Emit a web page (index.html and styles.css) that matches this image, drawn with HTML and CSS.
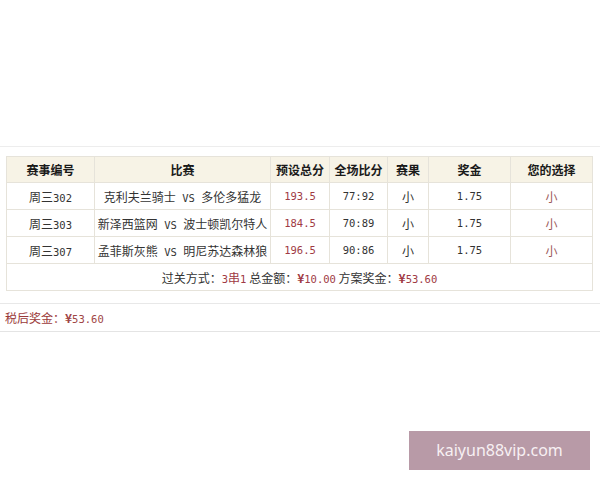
FILE: index.html
```html
<!DOCTYPE html>
<html lang="zh-CN">
<head>
<meta charset="utf-8">
<link rel="stylesheet" href="styles.css">
</head>
<body>
<div class="spacer"></div>
<div class="panel">
  <table class="bet">
    <colgroup>
      <col class="c1"><col class="c2"><col class="c3"><col class="c4"><col class="c5"><col class="c6"><col class="c7">
    </colgroup>
    <thead>
      <tr><th>赛事编号</th><th>比赛</th><th>预设总分</th><th>全场比分</th><th>赛果</th><th>奖金</th><th>您的选择</th></tr>
    </thead>
    <tbody>
      <tr><td>周三<span class="m">302</span></td><td>克利夫兰骑士<span class="m"> VS </span>多伦多猛龙</td><td class="red">193.5</td><td class="n">77:92</td><td>小</td><td class="n">1.75</td><td class="pick">小</td></tr>
      <tr><td>周三<span class="m">303</span></td><td>新泽西篮网<span class="m"> VS </span>波士顿凯尔特人</td><td class="red">184.5</td><td class="n">70:89</td><td>小</td><td class="n">1.75</td><td class="pick">小</td></tr>
      <tr><td>周三<span class="m">307</span></td><td>孟菲斯灰熊<span class="m"> VS </span>明尼苏达森林狼</td><td class="red">196.5</td><td class="n">90:86</td><td>小</td><td class="n">1.75</td><td class="pick">小</td></tr>
      <tr class="sum"><td colspan="7">过关方式：<span class="red"><span class="m">3</span>串<span class="m">1</span></span> 总金额：<span class="red"><b>¥</b><span class="m">10.00</span></span> 方案奖金：<span class="red"><b>¥</b><span class="m">53.60</span></span></td></tr>
    </tbody>
  </table>
</div>
<div class="after">税后奖金：<span class="amt"><b>¥</b><span class="m">53.60</span></span></div>
<div class="mark">kaiyun88vip.com</div>
</body>
</html>
```
FILE: styles.css
```css
html, body {
  margin: 0;
  padding: 0;
  background: #fff;
}
body {
  width: 600px;
  height: 480px;
  position: relative;
  font-family: "Noto Sans CJK SC", "Noto Sans", sans-serif;
  font-size: 12px;
  color: #333;
}
.spacer {
  height: 146px;
}
.panel {
  border-top: 1px solid #ededed;
  padding: 9px 8px 12px 6px;
}
.bet {
  width: 586px;
  border-collapse: collapse;
  table-layout: fixed;
  border: 1px solid #e2dfd6;
}
.c1 { width: 88px; }
.c2 { width: 176px; }
.c3 { width: 59px; }
.c4 { width: 58px; }
.c5 { width: 41px; }
.c6 { width: 82px; }
.c7 { width: 82px; }
.bet th, .bet td {
  border: 1px solid #e6e3da;
  text-align: center;
  padding: 0;
  white-space: nowrap;
}
.bet th {
  height: 25px;
  background: #f7f3e6;
  font-weight: bold;
  color: #1a1a1a;
}
.bet td {
  height: 26px;
}
.m {
  font-family: "DejaVu Sans Mono", monospace;
  font-size: 10.5px;
}
.bet td.n {
  font-family: "DejaVu Sans Mono", monospace;
  font-size: 10.5px;
}
.bet td.red {
  font-family: "DejaVu Sans Mono", monospace;
  font-size: 10.5px;
  color: #a03a44;
}
.bet td.pick {
  color: #9c5a5a;
}
.sum td {
  height: 26px;
}
.sum .red {
  color: #a03a44;
}
.red b, .amt b {
  font-weight: bold;
}
.after {
  border-top: 1px solid #e8e8e8;
  border-bottom: 1px solid #e4e4e4;
  height: 27px;
  line-height: 27px;
  padding-left: 5px;
  color: #9b3a3a;
}
.after .amt {
  color: #a04545;
}
.mark {
  position: absolute;
  left: 409px;
  top: 431px;
  width: 181px;
  height: 39px;
  line-height: 39px;
  background: #b89aa7;
  color: #f7f0f3;
  text-align: center;
  font-family: "Noto Sans", sans-serif;
  font-size: 16px;
}
```
